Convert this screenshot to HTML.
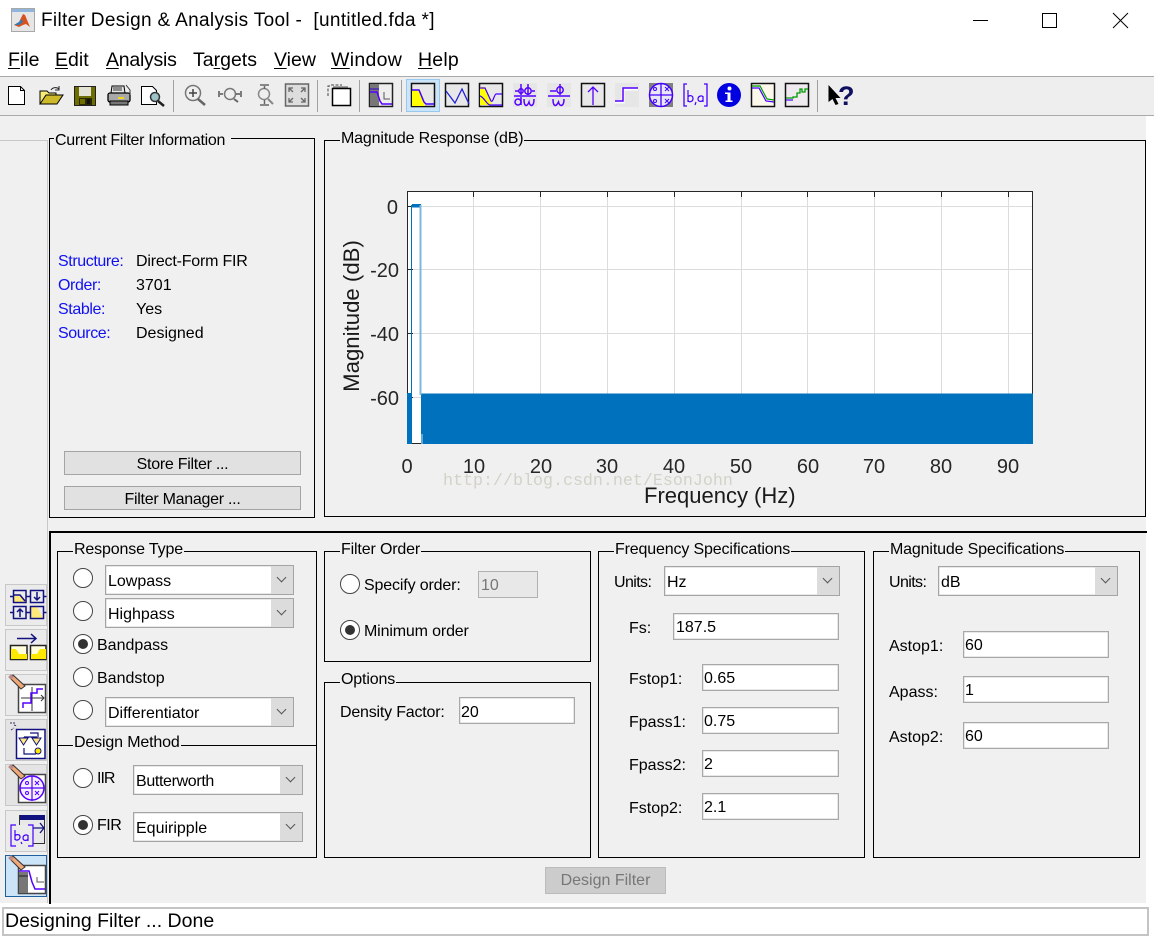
<!DOCTYPE html>
<html><head><meta charset="utf-8"><title>Filter Design &amp; Analysis Tool</title>
<style>
html,body{margin:0;padding:0;background:#fff;width:1154px;height:939px;overflow:hidden}
body{position:relative;font-family:"Liberation Sans",Arial,sans-serif;font-size:16px;color:#000}
.a{position:absolute;box-sizing:border-box}
.t{position:absolute;white-space:pre;line-height:20px;height:20px;margin-top:2px}
.b{position:absolute;box-sizing:border-box;border:1px solid #000}
.l{position:absolute;white-space:pre;line-height:20px;height:20px;background:#f0f0f0;padding:0 1px;margin-top:2px;letter-spacing:-.15px}
.i{position:absolute;box-sizing:border-box;background:#fff;border:1px solid #a8a8a8;box-shadow:inset 0 0 0 .5px #d0d0d0}
.d{position:absolute;box-sizing:border-box;background:#fff;border:1px solid #a4a4a4;box-shadow:inset 0 0 0 .5px #d0d0d0}
.d i{position:absolute;right:0;top:0;bottom:0;width:22px;background:#dcdcdc}
.d i:after{content:"";position:absolute;left:7px;top:8px;width:6px;height:6px;border-right:1px solid #555;border-bottom:1px solid #555;transform:rotate(45deg)}
.r{position:absolute;box-sizing:border-box;width:20px;height:20px;border-radius:50%;background:#fff;border:1.5px solid #444}
.r.on:after{content:"";position:absolute;left:3.5px;top:3.5px;width:10px;height:10px;border-radius:50%;background:#333}
.p{position:absolute;box-sizing:border-box;background:#e1e1e1;border:1px solid #a4a4a4;text-align:center;line-height:20px;padding-top:3px;letter-spacing:-.27px}
.u{text-decoration:underline;text-underline-offset:2px}
.m{font-size:19.5px;margin-top:0}
.n{margin-top:0}
.k{font-size:20px;color:#262626;text-align:center;width:50px;margin-left:-25px;margin-top:0;line-height:22px;height:22px}
.y{text-align:right;margin-left:-50px}
.bl{color:#1010f0;letter-spacing:-.4px}
</style></head><body>

<div class="a" style="left:0;top:115px;width:1146px;height:788px;background:#f0f0f0"></div>

<!-- title bar -->
<svg class="a" style="left:11px;top:8px" width="24" height="24" viewBox="0 0 24 24">
<rect x="0.5" y="0.5" width="23" height="23" fill="#e6e6e6" stroke="#a8a8a8"/>
<rect x="1" y="1" width="22" height="3" fill="#8fb5dc"/>
<path d="M3 17l5-3 4-8 2 1 5 12-4-3-3 1-4 2z" fill="#d9501e"/>
<path d="M3 17l5-3 3-3 1 3-4 3z" fill="#2e7cb8"/>
</svg>
<div class="t n" style="left:41px;top:11px;font-size:19px;letter-spacing:.33px">Filter Design &amp; Analysis Tool -  [untitled.fda *]</div>
<svg class="a" style="left:970px;top:10px" width="165" height="22">
<path d="M3 10.5h15" stroke="#000" stroke-width="1"/>
<rect x="72.5" y="3.5" width="14" height="14" fill="none" stroke="#000"/>
<path d="M143 3l15 15M158 3l-15 15" stroke="#000" stroke-width="1"/>
</svg>

<!-- menu -->
<div class="t m" style="left:8px;top:50px"><span class="u">F</span>ile</div>
<div class="t m" style="left:55px;top:50px"><span class="u">E</span>dit</div>
<div class="t m" style="left:106px;top:50px;letter-spacing:-.25px"><span class="u">A</span>nalysis</div>
<div class="t m" style="left:193px;top:50px">Ta<span class="u">r</span>gets</div>
<div class="t m" style="left:274px;top:50px"><span class="u">V</span>iew</div>
<div class="t m" style="left:331px;top:50px;letter-spacing:.3px"><span class="u">W</span>indow</div>
<div class="t m" style="left:418px;top:50px;letter-spacing:.2px"><span class="u">H</span>elp</div>

<!-- toolbar -->
<div class="a" style="left:0;top:76px;width:1154px;height:40px;background:#eee;border-top:1px solid #aaa;border-bottom:1px solid #aaa"></div>
<div class="a" style="left:406px;top:79px;width:34px;height:33px;background:#cce4f7;border:1px solid #98c8ee"></div>
<svg class="a" style="left:0;top:76px" width="1154" height="40" viewBox="0 76 1154 40">
<g stroke="#a0a0a0"><path d="M173.500 80v32M317.500 80v32M359.500 80v32M401.500 80v32M817.500 80v32"/></g>
<!-- new -->
<path d="M8.500 86.500h12l4 4v14h-16z" fill="#fff" stroke="#000"/><path d="M20.500 86.500v4h4" fill="none" stroke="#000"/>
<!-- open -->
<path d="M40 91h7l2 2h7v2h-9l-6 9h-1z" fill="#f7ec7a" stroke="#000"/><path d="M40 104l6-9h17l-6 9z" fill="#cdb92a" stroke="#000"/>
<path d="M51 90c2-3 6-3 8-1" fill="none" stroke="#222"/><path d="M59 86v4h-4" fill="none" stroke="#222"/>
<!-- save -->
<rect x="74.500" y="86.500" width="21" height="19" fill="#6e6e00" stroke="#222"/><rect x="79" y="87" width="12" height="9" fill="#e2e2d6"/><rect x="79" y="98" width="13" height="7" fill="#2a2a00"/><rect x="80" y="99" width="5" height="5" fill="#6e6e00"/><rect x="87" y="99" width="3" height="5" fill="#111"/>
<!-- print -->
<path d="M112 86h12l1 7h-14z" fill="#e4e4e4" stroke="#000"/><path d="M113 88h9M113 90h9" stroke="#333"/>
<rect x="108" y="93" width="22" height="9" rx="2" fill="#a8a8a8" stroke="#000" stroke-width="1.300"/><rect x="118" y="97" width="6" height="2" fill="#f0d820"/>
<rect x="110" y="101" width="18" height="4" fill="#777" stroke="#000"/><path d="M126 85l4 5v5" fill="none" stroke="#333"/>
<!-- preview -->
<path d="M141.500 86.500h11l4 4v14h-15z" fill="#fff" stroke="#000"/>
<circle cx="155" cy="97" r="4.500" fill="#9cc4c8" stroke="#333" stroke-width="1.500"/><path d="M158 101l6 5" stroke="#222" stroke-width="2.500"/>
<!-- zoom in -->
<circle cx="193" cy="93" r="7.500" fill="#efefef" stroke="#777" stroke-width="1.500"/><path d="M189 93h8M193 89v8" stroke="#444" stroke-width="1.500"/><path d="M198 99l7 6" stroke="#666" stroke-width="2.500"/>
<!-- zoom x -->
<circle cx="230" cy="94" r="5.500" fill="#efefef" stroke="#777" stroke-width="1.500"/><path d="M219 91v6M241 91v6M220 94h3M236 94h4" stroke="#555" stroke-width="1.500"/><path d="M234 99l4 3" stroke="#666" stroke-width="2"/>
<!-- zoom y -->
<circle cx="264" cy="94" r="5.500" fill="#efefef" stroke="#888" stroke-width="1.500"/><path d="M260 85h9M260 105h9M264.500 86v3M264.500 100v4" stroke="#666" stroke-width="1.500"/><path d="M268 99l5 5" stroke="#888" stroke-width="2"/>
<!-- fit -->
<rect x="285.500" y="84" width="23" height="22" fill="#ddd" stroke="#666" stroke-width="1.500"/>
<path d="M289 92v-4h4M305 92v-4h-4M289 98v4h4M305 98v4h-4M289 88l4 4M305 88l-4 4M289 102l4-4M305 102l-4-4" fill="none" stroke="#666" stroke-width="1.300"/>
<!-- window -->
<path d="M328 96v-10h3M331 85h11" fill="none" stroke="#444" stroke-dasharray="3 1.500"/><rect x="332.500" y="88.500" width="18" height="17" fill="#fff" stroke="#000" stroke-width="1.500"/><path d="M333 87h15" stroke="#555"/>
<!-- sidebar toggle -->
<rect x="369.500" y="83.500" width="23" height="23" fill="#eee" stroke="#222" stroke-width="1.500"/><rect x="370" y="84" width="9" height="22" fill="#777"/><path d="M370 89h9" stroke="#30c"/><path d="M370 92h7l3 9 2 3h10" fill="none" stroke="#50f" stroke-width="1.500"/><path d="M384 92v7h6" fill="none" stroke="#555"/>
<!-- magnitude sel -->
<rect x="411.500" y="83.500" width="23" height="23" fill="#e8e8e8" stroke="#111" stroke-width="1.500"/><path d="M412 90h6l7 16H412z" fill="#ff0"/><path d="M412 90h7l5 12 2 2h8" fill="none" stroke="#40f" stroke-width="1.500"/>
<!-- phase -->
<rect x="445.500" y="83.500" width="23" height="23" fill="#e8e8e8" stroke="#111" stroke-width="1.500"/><path d="M446 91l9 12 7-14 7 15" fill="none" stroke="#22d" stroke-width="1.300"/>
<!-- mag phase -->
<rect x="479.500" y="83.500" width="23" height="23" fill="#e8e8e8" stroke="#111" stroke-width="1.500"/><path d="M480 87h5l7 18h-12z" fill="#ff0"/><path d="M480 88h5l6 13c2 2 3-6 5-7h6M480 96c4 1 7 9 10 9h12" fill="none" stroke="#40f" stroke-width="1.200"/>
<!-- group delay -->
<rect x="513" y="83" width="24" height="24" fill="#e6e6e6"/>
<g fill="none" stroke="#50f" stroke-width="1.500"><path d="M514 96h22M515 91h4"/><circle cx="521" cy="91" r="2.200"/><path d="M521 84v11M528 84v11"/><circle cx="528" cy="91" r="3.200"/><path d="M532 91h3"/><circle cx="518" cy="102" r="3"/><path d="M521 97v8M524 99c0 8 3 8 5 3 1 5 5 5 5-3"/></g>
<!-- phase delay -->
<rect x="547" y="83" width="24" height="24" fill="#e6e6e6"/>
<g fill="none" stroke="#50f" stroke-width="1.500"><path d="M548 96h22M550 91h6"/><circle cx="560" cy="90" r="3.200"/><path d="M560 84v11M553 99c0 8 3 8 5.500 3 1 5 5.500 5 5.500-3"/></g>
<!-- impulse -->
<rect x="581.500" y="83.500" width="23" height="23" fill="#e8e8e8" stroke="#111" stroke-width="1.500"/><path d="M593 105V87M588 92l5-5 5 5" fill="none" stroke="#50f" stroke-width="1.300"/>
<!-- step -->
<rect x="615" y="83" width="24" height="24" fill="#e6e6e6"/><path d="M615 102h8V89h15" fill="none" stroke="#fff" stroke-width="3"/><path d="M615 101h8V88h15" fill="none" stroke="#50f" stroke-width="1.500"/>
<!-- pole zero -->
<rect x="649" y="83" width="24" height="24" fill="#808080"/><circle cx="661" cy="95" r="11.500" fill="#e8e8f4" stroke="#40f" stroke-width="1.500"/><path d="M649 95h24M661 83v24" stroke="#40f" stroke-width="1.300"/><g fill="none" stroke="#40f"><circle cx="655" cy="89" r="1.500"/><circle cx="655" cy="101" r="1.500"/><path d="M665 87l4 4M669 87l-4 4M665 99l4 4M669 99l-4 4"/></g>
<!-- coeffs -->
<path d="M687 84h-3v22h3M704 84h3v22h-3" fill="none" stroke="#40f" stroke-width="1.300"/><path d="M688 90v12M688 97c1-2 5-2 5 1.500s-4 4-5 2M695 105l1-3" fill="none" stroke="#40f" stroke-width="1.200"/><path d="M703 97c-1-2-5-1-5 2s4 3 5 1v-4v6" fill="none" stroke="#40f" stroke-width="1.200"/>
<!-- info -->
<circle cx="729" cy="95" r="12" fill="#0000e0"/><path d="M725 92.500h5.500v8h2v1.500h-7v-1.500h2v-6.500h-2.500z" fill="#fff"/><circle cx="729.500" cy="88.500" r="2" fill="#fff"/>
<!-- quant -->
<rect x="751.500" y="83.500" width="23" height="23" fill="#fdf8ec" stroke="#111" stroke-width="1.500"/><path d="M752 88h7l7 13 8 1" fill="none" stroke="#40f" stroke-width="1.200"/><path d="M752 86h8l7 13 7 1" fill="none" stroke="#090" stroke-width="1.200"/>
<rect x="785.500" y="83.500" width="23" height="23" fill="#efeaef" stroke="#111" stroke-width="1.500"/><path d="M786 98h7v-1h4v-4h3v-4h2v3h3v-3h3" fill="none" stroke="#090" stroke-width="1.300"/><path d="M786 100h7" stroke="#40f" stroke-width="1.200"/>
<!-- help -->
<path d="M828.500 85v17l4-3 3 6 3-1-3-6h5z" fill="#000"/>
<text x="838" y="105" font-family="Liberation Sans" font-weight="700" font-size="27" fill="#101060">?</text>
</svg>

<!-- left rail -->
<div class="a" style="left:0;top:140px;width:48px;height:763px;border-top:1px solid #c8c8c8;border-right:1px solid #c8c8c8"></div>
<div class="a" style="left:49px;top:532px;width:2px;height:372px;background:#000"></div>
<div class="a" style="left:49px;top:531px;width:1098px;height:2px;background:#000"></div>
<svg class="a" style="left:5px;top:584px" width="42" height="313" viewBox="5 584 42 313">
<g fill="#ebebeb" stroke="#c8c8c8"><rect x="5.500" y="584.500" width="41" height="41"/><rect x="5.500" y="629.500" width="41" height="41"/><rect x="5.500" y="674.500" width="41" height="41"/><rect x="5.500" y="719.500" width="41" height="41" fill="#e4e4e4"/><rect x="5.500" y="764.500" width="41" height="41" fill="#e4e4e4"/><rect x="5.500" y="810.500" width="41" height="41"/></g>
<rect x="5.500" y="855.500" width="41" height="41" fill="#cce4f7" stroke="#1f5f9f"/>
<!-- 1 -->
<path d="M14 596h6l5 6H14zM31 607h6l6 11H31z" fill="#ffe97a"/>
<g fill="none" stroke="#11117f" stroke-width="1.500"><rect x="13.500" y="590.500" width="12.500" height="12"/><rect x="30.500" y="590.500" width="13" height="12"/><rect x="13.500" y="606.500" width="12.500" height="12"/><rect x="30.500" y="606.500" width="13" height="12"/><path d="M10 596.500h3.500M26 596.500h4.500M43.500 596.500h3M10 612.500h3.500M26 612.500h4.500M43.500 612.500h3M37 592v8M34 597l3 3 3-3M20 617v-8M17 612l3-3 3 3M14 595h6l5 6"/></g>
<!-- 2 -->
<path d="M17 638.500h19M31 634l5 4.500-5 4.500" fill="none" stroke="#11117f" stroke-width="1.500"/>
<g stroke="#222" stroke-width="1.500"><rect x="10.500" y="645.500" width="16.500" height="14" fill="#ffffe0"/><rect x="30.500" y="645.500" width="15.500" height="14" fill="#ffffe0"/></g>
<path d="M11 649h5l3 5h8v5H11zM31 654h6l3-5h6v10H31z" fill="#ffe900"/>
<!-- 3 -->
<rect x="18.500" y="684.500" width="27" height="28" fill="#fff" stroke="#444" stroke-width="1.500"/><path d="M21 698h23M32 687v24" stroke="#333"/><path d="M41 695l3 3-3 3" stroke="#333" fill="none"/><path d="M23 708v-5h8v-10h6v-4h6" fill="none" stroke="#50f" stroke-width="1.500"/>
<path d="M10 678l3-3 12 11-4 3z" fill="#f0a878" stroke="#333"/><rect x="9" y="675" width="4" height="4" fill="#b88" transform="rotate(45 11 677)"/>
<!-- 4 -->
<rect x="16.500" y="729.500" width="28.500" height="29" fill="#fff" stroke="#11117f" stroke-width="1.500"/><path d="M24 737v4M37 737v4M24 748v6h12M30 733h8v4M24 737h13" fill="none" stroke="#11117f" stroke-width="1.200"/><path d="M19 738h9l-4.500 7zM32 738h9l-4.500 7z" fill="#ffe97a" stroke="#11117f"/><circle cx="38" cy="751" r="3" fill="#ffe900" stroke="#11117f"/>
<path d="M10 723h5M14 725l3 1M11 730l3-2" stroke="#336" stroke-dasharray="2 1"/>
<!-- 5 -->
<rect x="18.500" y="774.500" width="27" height="28" fill="#fff" stroke="#444" stroke-width="1.500"/><circle cx="32" cy="788" r="12" fill="#f4f0ff" stroke="#50f" stroke-width="1.500"/><path d="M20 788h25M32 776v25" stroke="#50f" stroke-width="1.200"/><g fill="none" stroke="#50f"><circle cx="27" cy="783" r="1.500"/><circle cx="27" cy="793" r="1.500"/><path d="M35 781l4 4M39 781l-4 4M35 791l4 4M39 791l-4 4"/></g>
<path d="M10 768l3-3 12 11-4 3z" fill="#f0a878" stroke="#333"/><rect x="9" y="765" width="4" height="4" fill="#b88" transform="rotate(45 11 767)"/>
<!-- 6 -->
<rect x="19.500" y="815.500" width="25" height="28" fill="#e8e8e8" stroke="#333"/><rect x="20" y="815" width="25" height="5" fill="#11117f"/><path d="M33 828h11M40 823l4 5-4 5" stroke="#11117f" fill="none" stroke-width="1.300"/>
<rect x="11" y="825" width="22" height="21" fill="#ebebeb"/>
<path d="M16 825h-5v21h5M28 825h5v21h-5M15 830v10M15 836c1-2 5-2 5 1s-4 4-5 2M21 842l1 2M28 836c-1-2-5-1-5 2s4 3 5 1v-4v6" fill="none" stroke="#40f" stroke-width="1.200"/>
<!-- 7 -->
<rect x="18.500" y="865.500" width="27" height="28" fill="#fff" stroke="#444" stroke-width="1.500"/><rect x="19" y="872" width="9" height="21" fill="#777"/><path d="M19 876h9" stroke="#222"/><path d="M19 871h10l3 11 3 7h10" fill="none" stroke="#50f" stroke-width="1.500"/><path d="M37 877v5h7" fill="none" stroke="#555"/>
<path d="M10 859l3-3 12 11-4 3z" fill="#f0a878" stroke="#333"/><rect x="9" y="856" width="4" height="4" fill="#b88" transform="rotate(45 11 858)"/>
</svg>

<!-- current filter info -->
<div class="b" style="left:49px;top:138px;width:266px;height:380px"></div>
<div class="l" style="left:54px;top:129px;padding-right:6px;letter-spacing:-.3px">Current Filter Information</div>
<div class="t bl" style="left:58px;top:250px">Structure:</div><div class="t" style="left:136px;top:250px;letter-spacing:-.2px">Direct-Form FIR</div>
<div class="t bl" style="left:58px;top:274px">Order:</div><div class="t" style="left:136px;top:274px">3701</div>
<div class="t bl" style="left:58px;top:298px">Stable:</div><div class="t" style="left:136px;top:298px">Yes</div>
<div class="t bl" style="left:58px;top:322px">Source:</div><div class="t" style="left:136px;top:322px">Designed</div>
<div class="p" style="left:64px;top:451px;width:237px;height:24px">Store Filter ...</div>
<div class="p" style="left:64px;top:486px;width:237px;height:24px">Filter Manager ...</div>

<!-- magnitude response -->
<div class="b" style="left:324px;top:140px;width:822px;height:377px"></div>
<div class="l" style="left:340px;top:127px">Magnitude Response (dB)</div>
<svg class="a" style="left:407px;top:191px" width="626" height="253" viewBox="407 191 626 253">
<rect x="407" y="191" width="626" height="253" fill="#fff"/>
<g stroke="#dcdcdc"><path d="M473.500 191v253M540.500 191v253M607.500 191v253M674.500 191v253M741.500 191v253M807.500 191v253M874.500 191v253M941.500 191v253M1008.500 191v253M407 206.500h626M407 269.500h626M407 333.500h626M407 397.500h626"/></g>
<g stroke="#262626"><path d="M473.500 191v6M540.500 191v6M607.500 191v6M674.500 191v6M741.500 191v6M807.500 191v6M874.500 191v6M941.500 191v6M1008.500 191v6M407 206.500h6M407 269.500h6M407 333.500h6M407 397.500h6M473.500 444v-6M540.500 444v-6M607.500 444v-6M674.500 444v-6M741.500 444v-6"/></g>
<rect x="407.500" y="191.500" width="625" height="252" fill="none" stroke="#262626"/>
<rect x="407" y="393" width="4.500" height="51" fill="#0072bd"/>
<rect x="421" y="393.500" width="612" height="50.500" fill="#0072bd"/>
<rect x="411" y="205" width="1" height="239" fill="#0072bd"/>
<rect x="412" y="204" width="9" height="3.500" fill="#0072bd"/>
<rect x="419.500" y="205" width="2" height="190" fill="#7fb8de"/>
<rect x="421.500" y="434" width="1" height="10" fill="#bfe0f0"/>
</svg>
<div class="t k y" style="left:398px;top:197px">0</div>
<div class="t k y" style="left:399px;top:260px">-20</div>
<div class="t k y" style="left:399px;top:324px">-40</div>
<div class="t k y" style="left:399px;top:388px">-60</div>
<div class="t k" style="left:407px;top:456px">0</div>
<div class="t k" style="left:474px;top:456px">10</div>
<div class="t k" style="left:541px;top:456px">20</div>
<div class="t k" style="left:607px;top:456px">30</div>
<div class="t k" style="left:674px;top:456px">40</div>
<div class="t k" style="left:741px;top:456px">50</div>
<div class="t k" style="left:808px;top:456px">60</div>
<div class="t k" style="left:874px;top:456px">70</div>
<div class="t k" style="left:941px;top:456px">80</div>
<div class="t k" style="left:1008px;top:456px">90</div>
<div class="t n" style="left:644px;top:484px;font-size:22px;line-height:24px;height:24px;color:#1a1a1a">Frequency (Hz)</div>
<div class="t n" style="left:352px;top:316px;font-size:22.2px;line-height:24px;height:24px;color:#1a1a1a;transform:translate(-50%,-50%) rotate(-90deg);transform-origin:center">Magnitude (dB)</div>
<div class="t" style="left:443px;top:470px;font-family:'Liberation Mono',monospace;font-size:16.67px;color:#d2d2c8">http://blog.csdn.net/EsonJohn</div>

<!-- response type -->
<div class="b" style="left:57px;top:551px;width:260px;height:307px"></div>
<div class="a" style="left:57px;top:745px;width:260px;height:1px;background:#000"></div>
<div class="l" style="left:73px;top:538px">Response Type</div>
<div class="l" style="left:73px;top:731px">Design Method</div>
<div class="r" style="left:73px;top:568px"></div><div class="d" style="left:105px;top:565px;width:189px;height:30px"><i></i></div><div class="t" style="left:108px;top:570px">Lowpass</div>
<div class="r" style="left:73px;top:601px"></div><div class="d" style="left:105px;top:598px;width:189px;height:30px"><i></i></div><div class="t" style="left:108px;top:603px">Highpass</div>
<div class="r on" style="left:73px;top:634px"></div><div class="t" style="left:97px;top:634px">Bandpass</div>
<div class="r" style="left:73px;top:667px"></div><div class="t" style="left:97px;top:667px">Bandstop</div>
<div class="r" style="left:73px;top:700px"></div><div class="d" style="left:105px;top:697px;width:189px;height:30px"><i></i></div><div class="t" style="left:108px;top:702px">Differentiator</div>
<div class="r" style="left:73px;top:768px"></div><div class="t" style="left:97px;top:767px;letter-spacing:-1px">IIR</div><div class="d" style="left:133px;top:765px;width:170px;height:30px"><i></i></div><div class="t" style="left:136px;top:770px;letter-spacing:-.35px">Butterworth</div>
<div class="r on" style="left:73px;top:815px"></div><div class="t" style="left:97px;top:814px;letter-spacing:-.5px">FIR</div><div class="d" style="left:133px;top:812px;width:170px;height:30px"><i></i></div><div class="t" style="left:136px;top:817px">Equiripple</div>

<!-- filter order -->
<div class="b" style="left:324px;top:551px;width:267px;height:111px"></div>
<div class="l" style="left:340px;top:538px">Filter Order</div>
<div class="r" style="left:340px;top:574px"></div><div class="t" style="left:364px;top:574px;letter-spacing:-.15px">Specify order:</div>
<div class="a" style="left:478px;top:571px;width:60px;height:27px;background:#e8e8e8;border:1px solid #b0b0b0"></div><div class="t" style="left:481px;top:574px;color:#777">10</div>
<div class="r on" style="left:340px;top:620px"></div><div class="t" style="left:364px;top:620px;letter-spacing:-.15px">Minimum order</div>

<!-- options -->
<div class="b" style="left:324px;top:682px;width:267px;height:176px"></div>
<div class="l" style="left:340px;top:668px">Options</div>
<div class="t" style="left:340px;top:701px;letter-spacing:-.2px">Density Factor:</div>
<div class="i" style="left:459px;top:697px;width:116px;height:27px"></div><div class="t" style="left:461px;top:701px">20</div>

<!-- frequency -->
<div class="b" style="left:598px;top:551px;width:267px;height:307px"></div>
<div class="l" style="left:614px;top:538px">Frequency Specifications</div>
<div class="t" style="left:614px;top:571px;letter-spacing:-.6px">Units:</div><div class="d" style="left:664px;top:566px;width:176px;height:30px"><i></i></div><div class="t" style="left:667px;top:571px">Hz</div>
<div class="t" style="left:629px;top:617px">Fs:</div><div class="i" style="left:673px;top:613px;width:166px;height:27px"></div><div class="t" style="left:676px;top:616px">187.5</div>
<div class="t" style="left:629px;top:668px">Fstop1:</div><div class="i" style="left:702px;top:664px;width:137px;height:27px"></div><div class="t" style="left:704px;top:667px">0.65</div>
<div class="t" style="left:629px;top:711px">Fpass1:</div><div class="i" style="left:702px;top:707px;width:137px;height:27px"></div><div class="t" style="left:704px;top:710px">0.75</div>
<div class="t" style="left:629px;top:754px">Fpass2:</div><div class="i" style="left:702px;top:750px;width:137px;height:27px"></div><div class="t" style="left:704px;top:753px">2</div>
<div class="t" style="left:629px;top:797px">Fstop2:</div><div class="i" style="left:702px;top:793px;width:137px;height:27px"></div><div class="t" style="left:704px;top:796px">2.1</div>

<!-- magnitude specs -->
<div class="b" style="left:873px;top:551px;width:267px;height:307px"></div>
<div class="l" style="left:889px;top:538px">Magnitude Specifications</div>
<div class="t" style="left:889px;top:571px;letter-spacing:-.6px">Units:</div><div class="d" style="left:938px;top:566px;width:180px;height:30px"><i></i></div><div class="t" style="left:941px;top:571px">dB</div>
<div class="t" style="left:889px;top:635px">Astop1:</div><div class="i" style="left:963px;top:631px;width:146px;height:27px"></div><div class="t" style="left:965px;top:634px">60</div>
<div class="t" style="left:889px;top:681px">Apass:</div><div class="i" style="left:963px;top:676px;width:146px;height:27px"></div><div class="t" style="left:965px;top:679px">1</div>
<div class="t" style="left:889px;top:726px">Astop2:</div><div class="i" style="left:963px;top:722px;width:146px;height:27px"></div><div class="t" style="left:965px;top:725px">60</div>

<!-- design filter -->
<div class="p" style="left:545px;top:867px;width:121px;height:27px;background:#ccc;border-color:#bbb;color:#777;padding-top:3px;letter-spacing:0">Design Filter</div>

<!-- status -->
<div class="a" style="left:2px;top:907px;width:1147px;height:29px;background:#fff;border:2px solid #c4c4c4"></div>
<div class="t n" style="left:5px;top:911px;font-size:19.5px">Designing Filter ... Done</div>
</body></html>
